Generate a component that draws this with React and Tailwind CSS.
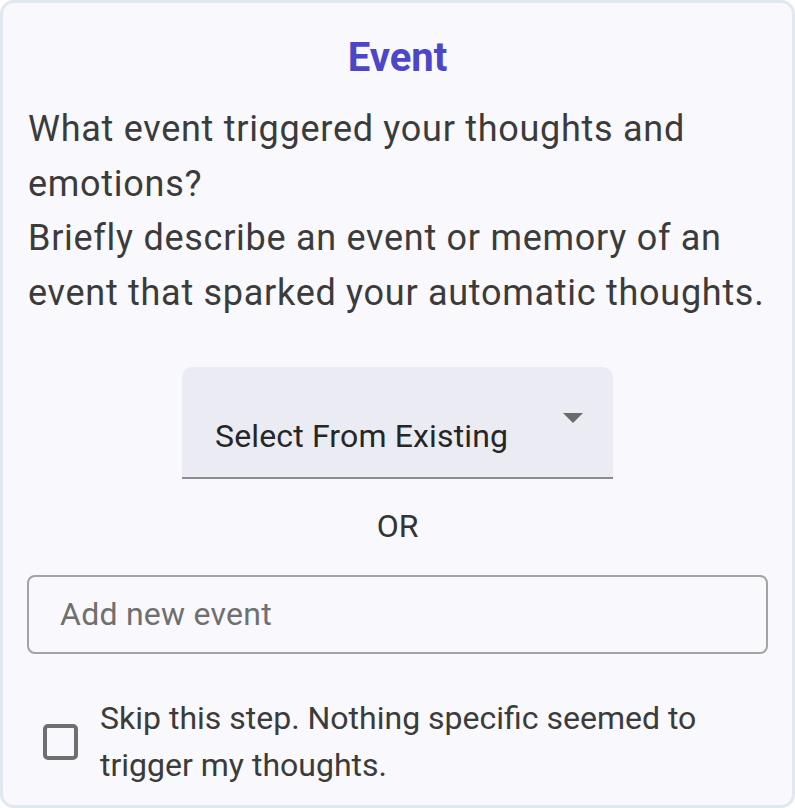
export default function App() {
  return (
    <div className="w-[795px] h-[808px] bg-white" style={{ fontFamily: "Roboto, 'Noto Sans', sans-serif" }}>
      <div className="w-full h-full border-[3px] border-[#e2e8f0] rounded-[14px] bg-[#f8f8fd] flex flex-col px-[22px]">
        <h1 className="mt-[31px] text-center text-[40px] leading-[48px] font-bold text-[#4c46c8]">Event</h1>
        <p className="mt-[20px] text-[36px] leading-[54.67px] tracking-[0.72px] text-[#3b3b3b] whitespace-nowrap pl-[3px]">
          What event triggered your thoughts and<br />
          emotions?<br />
          Briefly describe an event or memory of an<br />
          event that sparked your automatic thoughts.
        </p>
        <div className="mt-[46px] self-center w-[431px] h-[112px] bg-[#ebebf3] rounded-t-[10px] border-b-2 border-[#8c8c8c] flex items-center justify-between pl-[33px] pr-[30px]">
          <span className="text-[32px] leading-[40px] tracking-[0.15px] text-[#262626] mt-[28px]">Select From Existing</span>
          <svg width="20" height="10" viewBox="0 0 20 10" className="mb-[8px]">
            <path d="M0 0 L20 0 L10 10 Z" fill="#6b6b6b" />
          </svg>
        </div>
        <div className="mt-[23px] text-center text-[32px] leading-[48px] text-[#333333]">OR</div>
        <div className="mt-[25px] h-[79px] border-2 border-[#a3a3a3] rounded-[8px] flex items-center pl-[31px] mx-[2px]">
          <span className="text-[32px] leading-[40px] tracking-[0.25px] text-[#6f6f6f]">Add new event</span>
        </div>
        <div className="mt-[41px] flex items-center">
          <div className="ml-[18px] w-[35px] h-[36px] border-[4px] border-[#6f6f6f] rounded-[5px] shrink-0" />
          <p className="ml-[22px] text-[32px] leading-[47px] text-[#3b3b3b] whitespace-nowrap">
            Skip this step. Nothing specific seemed to<br />
            trigger my thoughts.
          </p>
        </div>
      </div>
    </div>
  );
}
